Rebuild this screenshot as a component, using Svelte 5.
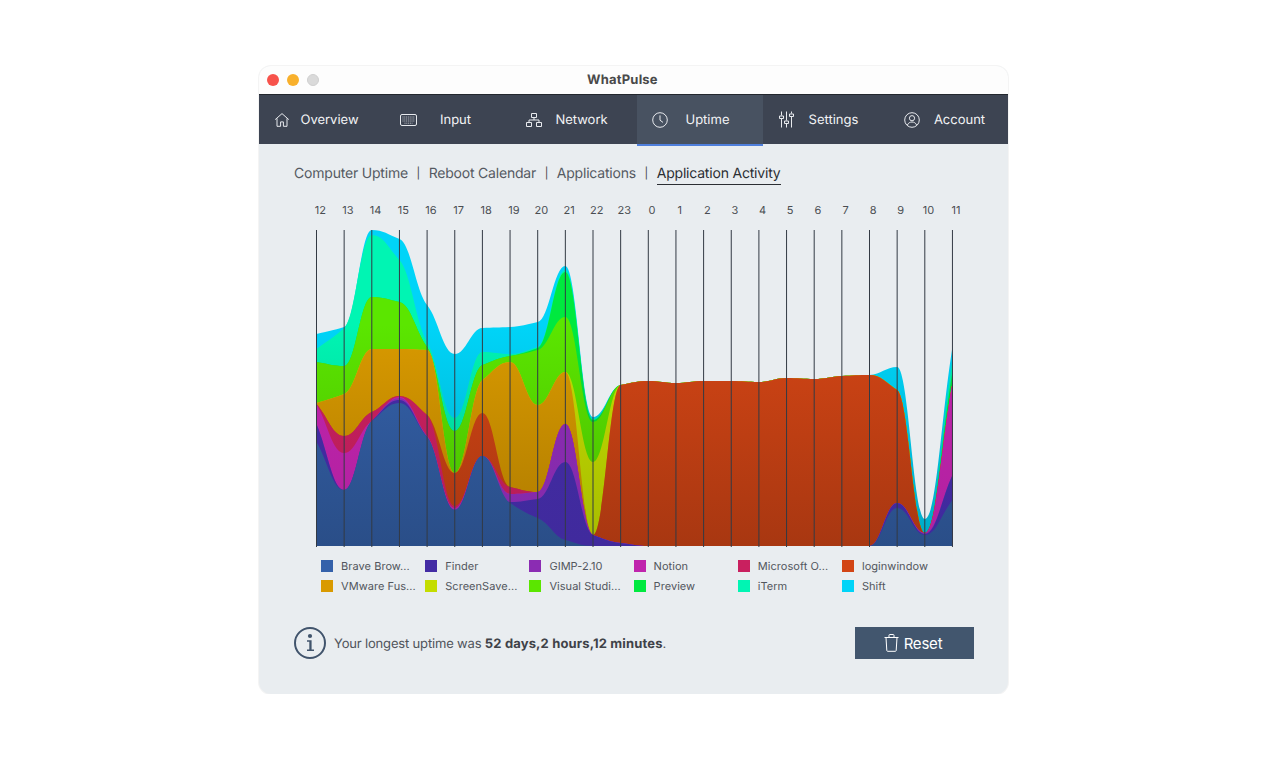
<script>
  const hours = [12,13,14,15,16,17,18,19,20,21,22,23,0,1,2,3,4,5,6,7,8,9,10,11];
  const X0 = 2.5, STEP = 27.65, BASE = 316;
  const xs = hours.map((_, i) => X0 + STEP * i);
  const login = [381,383,381,381,382,378,379,376,375];
  const zero = Array(9).fill(546);
  const layers = [
    { name: 'Shift', label: 'Shift', color: '#00d4f8', dark: 0.8, top: [334,327,230,239,305,354,328,327,322,266,417,385,...login,367,519,347] },
    { name: 'iTerm', label: 'iTerm', color: '#00f5b3', dark: 0.8, top: [349,328,235,260,342,418,352,354,347,270,419,385,...login,390,533,360] },
    { name: 'Preview', label: 'Preview', color: '#00e93f', dark: 0.8, top: [362,366,297,302,347,431,365,356,348,272,420,385,...login,390,533,372] },
    { name: 'Visual', label: 'Visual Studi...', color: '#5be600', dark: 0.8, top: [362,366,297,302,347,431,365,356,350,317,422,385,...login,390,533,383] },
    { name: 'ScreenSaver', label: 'ScreenSave...', color: '#c4dd00', dark: 0.85, top: [403,394,349,349,350,473,380,362,405,372,462,385,...login,390,533,383] },
    { name: 'VMware', label: 'VMware Fus...', color: '#d99a00', dark: 0.8, top: [403,394,349,349,350,473,380,362,405,372,535,385,...login,390,533,383] },
    { name: 'login', label: 'loginwindow', color: '#d24515', dark: 0.8, top: [404,436,412,396,415,473,413,487,492,424,535,385,...login,390,533,383] },
    { name: 'Microsoft', label: 'Microsoft O...', color: '#c9205f', dark: 0.9, top: [404,436,412,396,415,506,456,487,492,424,535,543,...zero,503,533,383] },
    { name: 'Notion', label: 'Notion', color: '#c024ad', dark: 0.92, top: [404,453,421,397,436,508,456,494,492,424,535,543,...zero,503,533,383] },
    { name: 'GIMP', label: 'GIMP-2.10', color: '#8b2cb3', dark: 0.95, top: [424,490,421,398,436,509,456,494,492,424,535,543,...zero,503,533,475] },
    { name: 'Finder', label: 'Finder', color: '#432ca4', dark: 0.96, top: [424,490,421,400,437,510,456,502,499,462,535,543,...zero,503,534,475] },
    { name: 'Brave', label: 'Brave Brow...', color: '#3461aa', dark: 0.8, top: [442,490,421,403,437,510,456,503,518,540,546,546,...zero,508,535,500] }
  ];
  const legendOrder = ['Brave','Finder','GIMP','Notion','Microsoft','login','VMware','ScreenSaver','Visual','Preview','iTerm','Shift'];
  const legend = legendOrder.map((n) => layers.find((l) => l.name === n));

  function darken(hex, f) {
    const n = parseInt(hex.slice(1), 16);
    const c = [n >> 16, (n >> 8) & 255, n & 255].map((v) => Math.round(v * f));
    return `rgb(${c.join(',')})`;
  }

  // monotone X interpolation, tangents kept shallow so shoulders stay visible
  function curve(ys) {
    const n = ys.length;
    const slopes = [];
    for (let i = 0; i < n - 1; i++) slopes.push((ys[i + 1] - ys[i]) / STEP);
    const t = ys.map((_, i) => {
      if (i === 0) return slopes[0];
      if (i === n - 1) return slopes[n - 2];
      const a = slopes[i - 1], b = slopes[i];
      if (a * b <= 0) return 0;
      return 1.2 * Math.sign(a) * Math.min(Math.abs(a), Math.abs(b), (Math.abs(a) + Math.abs(b)) / 4);
    });
    let d = `M${xs[0]} ${ys[0] - 230}`;
    const h = STEP / 2.4;
    for (let i = 0; i < n - 1; i++) {
      d += `C${(xs[i] + h).toFixed(2)} ${(ys[i] - 230 + t[i] * h).toFixed(2)} ${(xs[i + 1] - h).toFixed(2)} ${(ys[i + 1] - 230 - t[i + 1] * h).toFixed(2)} ${xs[i + 1].toFixed(2)} ${ys[i + 1] - 230}`;
    }
    return d + `L${xs[n - 1]} ${BASE}L${xs[0]} ${BASE}Z`;
  }
</script>

<div class="window">
  <header class="titlebar">
    <div class="lights">
      <span class="light red"></span>
      <span class="light yellow"></span>
      <span class="light grey"></span>
    </div>
    <div class="title">WhatPulse</div>
  </header>

  <nav class="nav">
    <div class="tab">
      <span class="ico"><svg width="16" height="16" viewBox="0 0 16 16"><path d="M1.200 7.600 8 1.600l6.800 6M3 6.400v7.900h3.600V9.900h2.800v4.400H13V6.400"/></svg></span>
      <span class="lab">Overview</span>
    </div>
    <div class="tab">
      <span class="ico"><svg width="17" height="12" viewBox="0 0 17 12"><rect x=".5" y=".5" width="16" height="11" rx="1.5"/><path class="thin" d="M2.500 3h12M2.500 5h12M2.500 7h12M4.500 9.200h8" stroke-dasharray="1 .8"/></svg></span>
      <span class="lab">Input</span>
    </div>
    <div class="tab">
      <span class="ico"><svg width="16" height="14" viewBox="0 0 16 14"><path d="M5.500.5h5v4h-5zM.5 9.500h5v4h-5zM10.500 9.500h5v4h-5zM8 4.500V7M3 9.500V7h10v2.500"/></svg></span>
      <span class="lab">Network</span>
    </div>
    <div class="tab active">
      <span class="ico"><svg width="16" height="16" viewBox="0 0 16 16"><circle cx="8" cy="8" r="7.300"/><path d="M8 3.400V8.200l3 2.200"/></svg></span>
      <span class="lab">Uptime</span>
    </div>
    <div class="tab">
      <span class="ico"><svg width="15" height="17" viewBox="0 0 15 17"><path d="M2.500.5v4M2.500 7.500v9M7.500.5v9M7.500 12.500v4M12.500.5v2M12.500 5.500v11M.5 5h4v2.500h-4zM5.500 10h4v2.500h-4zM10.500 3h4v2.500h-4z"/></svg></span>
      <span class="lab">Settings</span>
    </div>
    <div class="tab">
      <span class="ico"><svg width="16" height="16" viewBox="0 0 16 16"><circle cx="8" cy="8" r="7.300"/><circle cx="8" cy="6.200" r="2.600"/><path d="M3.400 13c.8-2 2.600-3 4.600-3s3.800 1 4.600 3"/></svg></span>
      <span class="lab">Account</span>
    </div>
  </nav>

  <main class="content">
    <div class="subtabs">
      <span>Computer Uptime</span><i>|</i>
      <span>Reboot Calendar</span><i>|</i>
      <span>Applications</span><i>|</i>
      <span class="current">Application Activity</span>
    </div>

    <div class="hours">
      {#each hours as h}<span>{h}</span>{/each}
    </div>

    <svg class="chart" width="642" height="317" viewBox="0 0 642 317">
      <defs>
        {#each layers as l}
          <linearGradient id={'g-' + l.name} gradientUnits="userSpaceOnUse" x1="0" y1="0" x2="0" y2="316">
            <stop offset="0" stop-color={l.color} />
            <stop offset="0.3" stop-color={l.color} />
            <stop offset="1" stop-color={darken(l.color, l.dark)} />
          </linearGradient>
        {/each}
      </defs>
      {#each layers as l}
        <path d={curve(l.top)} fill={'url(#g-' + l.name + ')'} />
      {/each}
      {#each xs as x}
        <line x1={x} x2={x} y1="0" y2="317" stroke="#333a44" stroke-width="1" />
      {/each}
    </svg>

    <div class="legend">
      {#each legend as l}
        <div class="item"><span class="swatch" style="background:{l.color}"></span><span>{l.label}</span></div>
      {/each}
    </div>

    <div class="footer">
      <svg class="info" width="32" height="32" viewBox="0 0 32 32">
        <circle cx="16" cy="16" r="15" fill="none" stroke="#41546c" stroke-width="2" />
        <circle cx="16" cy="9" r="2.100" fill="#41546c" />
        <path d="M13 13.200h4.600v9.300H20v1.500h-7v-1.500h2.300v-7.800H13z" fill="#41546c" />
      </svg>
      <p>Your longest uptime was <b>52 days,2 hours,12 minutes</b>.</p>
      <button class="reset">
        <svg width="15" height="18" viewBox="0 0 15 18" fill="none" stroke="#fff" stroke-width="1"><path d="M.5 3.500h14M5 3.300V1.200c0-.4.300-.7.700-.7h3.600c.4 0 .7.300.7.700v2.100M2 3.500l.8 13c0 .4.400.8.800.8h7.800c.4 0 .8-.4.800-.8l.8-13"/></svg>
        <span>Reset</span>
      </button>
    </div>
  </main>
</div>

<style>
  :global(body) {
    margin: 0;
    background: #fff;
  }
  .window {
    width: 749px;
    height: 628px;
    margin: 66px 0 0 259px;
    border-radius: 12px;
    overflow: hidden;
    background: #e9edf0;
    box-shadow: 0 0 0 1px #f4f4f4;
    font-family: Inter, "Liberation Sans", sans-serif;
    text-rendering: geometricPrecision;
    opacity: 0.999;
    display: flex;
    flex-direction: column;
  }
  .titlebar {
    height: 28px;
    flex: none;
    background: #fdfdfd;
    border-bottom: 1px solid #23272e;
    display: flex;
    align-items: center;
  }
  .lights {
    display: flex;
    gap: 8px;
    margin-left: 8px;
  }
  .light {
    width: 12px;
    height: 12px;
    border-radius: 50%;
    box-sizing: border-box;
  }
  .red { background: #f7524b; }
  .yellow { background: #f8b02c; }
  .grey { background: #dadada; border: 1px solid #cfcfcf; }
  .title {
    margin-left: 268px;
    font-size: 13px;
    font-weight: 700;
    color: #4a4a4a;
    letter-spacing: 0.2px;
  }
  .nav {
    height: 49px;
    flex: none;
    background: #3d4452;
    display: grid;
    grid-template-columns: repeat(6, 126px);
    margin-right: -7px;
  }
  .tab {
    position: relative;
    display: flex;
    align-items: center;
    color: #f2f3f5;
    font-size: 13px;
  }
  .tab.active {
    background: #485261;
  }
  .tab.active::after {
    content: "";
    position: absolute;
    left: 0;
    right: 0;
    bottom: -2px;
    height: 2px;
    background: #4f7fdc;
  }
  .ico {
    width: 46px;
    display: flex;
    justify-content: center;
    flex: none;
  }
  .ico svg {
    fill: none;
    stroke: #e8eaee;
    stroke-width: 1;
  }
  .ico .thin {
    stroke-width: 1;
    opacity: 0.7;
  }
  .lab {
    width: 49px;
    padding-top: 1px;
    display: flex;
    justify-content: center;
    white-space: nowrap;
  }
  .content {
    flex: 1;
    display: flex;
    flex-direction: column;
    padding-left: 35px;
  }
  .subtabs {
    display: flex;
    align-items: center;
    height: 24px;
    margin-top: 17px;
    font-size: 14px;
    letter-spacing: -0.2px;
    color: #555a62;
  }
  .subtabs i {
    font-style: normal;
    font-size: 11px;
    color: #444;
    width: 20.7px;
    text-align: center;
  }
  .subtabs .current {
    color: #2b2e33;
    box-sizing: border-box;
    height: 24px;
    line-height: 25px;
    margin-top: -1px;
    border-bottom: 1px solid #2b2e33;
    padding-right: 1px;
  }
  .hours {
    display: grid;
    grid-template-columns: repeat(24, 27.65px);
    margin: 18px 0 0 12.5px;
    height: 27px;
    font-size: 11px;
    line-height: 14px;
    color: #4a4d52;
    text-align: center;
  }
  .chart {
    display: block;
    margin-left: 20px;
  }
  .legend {
    display: grid;
    grid-template-columns: repeat(6, 104.2px);
    grid-auto-rows: 20px;
    margin: 9px 0 0 27px;
    font-size: 11px;
    letter-spacing: 0.05px;
    color: #52565d;
  }
  .item {
    display: flex;
    align-items: center;
    gap: 8px;
    white-space: nowrap;
  }
  .swatch {
    width: 12px;
    height: 12px;
    flex: none;
  }
  .footer {
    display: flex;
    align-items: center;
    margin-top: 31px;
    height: 32px;
  }
  .info {
    flex: none;
  }
  .footer p {
    margin: 1px 0 0 8px;
    font-size: 13px;
    letter-spacing: -0.17px;
    color: #50545b;
  }
  .footer b {
    font-weight: 700;
    letter-spacing: 0.15px;
    color: #3f4248;
  }
  .reset {
    margin-left: auto;
    margin-right: 34px;
    width: 119px;
    height: 32px;
    border: 0;
    background: #42566e;
    color: #fff;
    font: 15px Inter, "Liberation Sans", sans-serif;
    letter-spacing: -0.2px;
    display: flex;
    align-items: center;
    justify-content: center;
    gap: 5px;
    padding: 0 3px 0 0;
  }
</style>
